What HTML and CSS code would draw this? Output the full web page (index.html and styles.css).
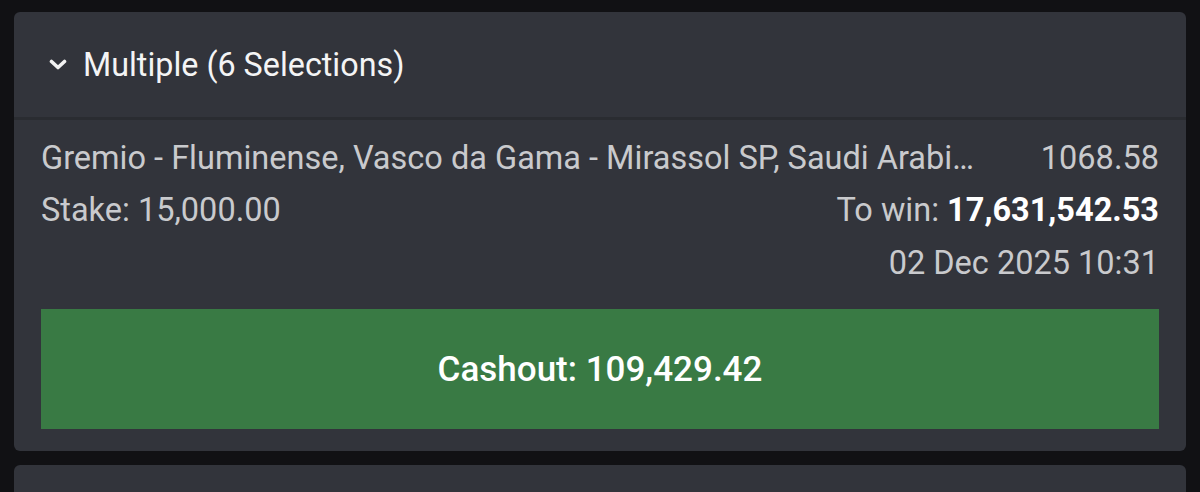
FILE: index.html
```html
<!DOCTYPE html>
<html>
<head>
<meta charset="utf-8">
<link rel="stylesheet" href="styles.css">
</head>
<body>
<div class="page">
  <section class="card">
    <header class="card-head">
      <svg class="chev" width="18" height="12" viewBox="0 0 18 12"><path d="M2.5 2.5 L9 8.5 L15.5 2.5" fill="none" stroke="#f2f2f2" stroke-width="3.6" stroke-linecap="round" stroke-linejoin="round"/></svg>
      <span class="title">Multiple (6 Selections)</span>
    </header>
    <div class="card-body">
      <div class="row row-first">
        <span class="events">Gremio - Fluminense, Vasco da Gama - Mirassol SP, Saudi Arabi…</span>
        <span class="odds">1068.58</span>
      </div>
      <div class="row row-mid">
        <span class="stake">Stake: 15,000.00</span>
        <span class="win">To win: <b>17,631,542.53</b></span>
      </div>
      <div class="row row-end">
        <span class="date">02 Dec 2025 10:31</span>
      </div>
      <button class="cashout">Cashout: 109,429.42</button>
    </div>
  </section>
  <section class="card card-next"></section>
</div>
</body>
</html>
```
FILE: styles.css
```css
html, body {
  margin: 0;
  padding: 0;
  background: #111114;
  height: 100%;
  overflow: hidden;
}
body {
  font-family: Roboto, "Noto Sans", sans-serif;
}
.page {
  padding: 12px 14px 0 14px;
  display: flex;
  flex-direction: column;
  gap: 14px;
}
.card {
  background: #32343b;
  border-radius: 6px;
}
.card-head {
  height: 105px;
  display: flex;
  align-items: center;
  padding-left: 35px;
  border-bottom: 3px solid #2a2c31;
}
.chev {
  margin-right: 16px;
  margin-top: 0;
}
.title {
  color: #f4f4f5;
  font-size: 32.3px;
  line-height: 40px;
}
.card-body {
  padding: 18px 27px 22px 27px;
}
.row {
  display: flex;
  justify-content: space-between;
  align-items: baseline;
  height: 52px;
  font-size: 32.5px;
  color: #c9cacd;
  line-height: 40px;
}
.row-mid {
  height: 53px;
}
.row-end {
  justify-content: flex-end;
}
.events {
  white-space: nowrap;
}
.odds, .win, .date, .stake {
  white-space: nowrap;
}
.win b {
  color: #ffffff;
  font-weight: 700;
}
.cashout {
  display: block;
  width: 100%;
  height: 120px;
  margin-top: 14px;
  background: #397a44;
  border: none;
  color: #ffffff;
  font-family: Roboto, sans-serif;
  font-weight: 500;
  font-size: 35px;
}
.card-next {
  height: 28px;
  border-radius: 6px 6px 0 0;
}
```
